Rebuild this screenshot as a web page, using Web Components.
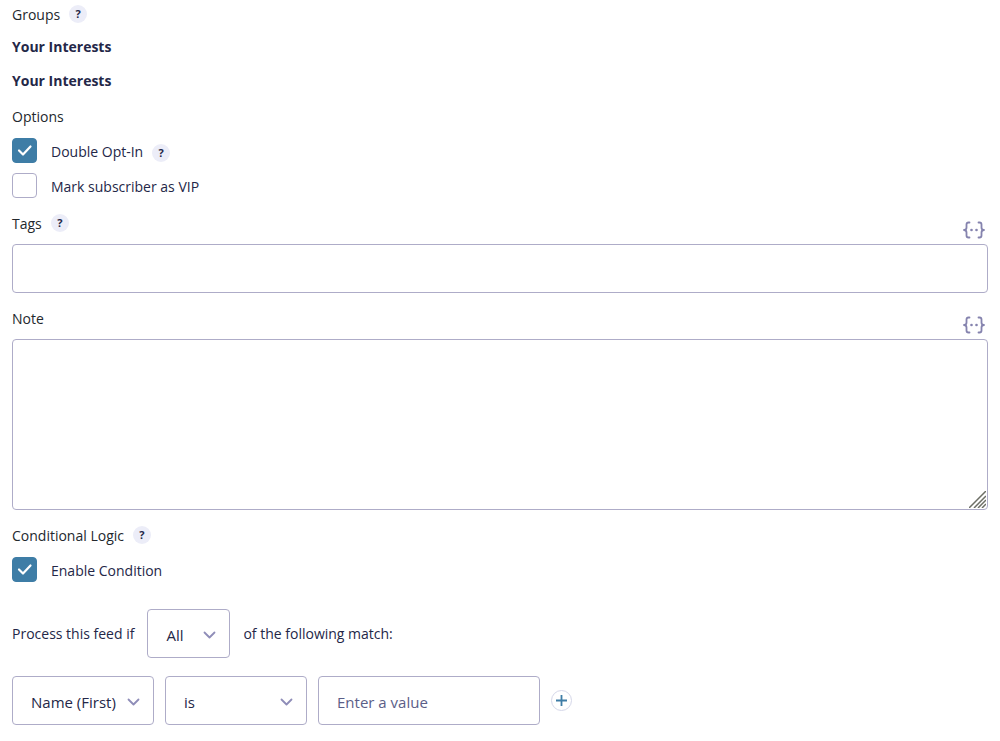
<!DOCTYPE html>
<html lang="en">
<head>
<meta charset="utf-8">
<meta name="viewport" content="width=device-width, initial-scale=1">
<title>Feed Settings</title>
<style>
    body {
        margin: 0;
        background: #fff;
        color: #242748;
        font: 14px/20px "Open Sans", "Noto Sans", sans-serif;
        --label: #23282d;
        --border: #aeacc8;
        --icon: #8583ae;
        --accent: #3e7da6;
        --control-height: 49px;
        --control-size: 15px;
    }
</style>
</head>
<body>
<feed-settings></feed-settings>

<script>
    /* Shared box for text inputs, textareas and selects. */
    const controlStyles = `
        .control {
            display: block;
            box-sizing: border-box;
            width: 100%;
            height: var(--control-height);
            margin: 0;
            padding: 2px 18px 0;
            border: 1px solid var(--border);
            border-radius: 4px;
            background: #fff;
            color: inherit;
            font: inherit;
            font-size: var(--control-size);
            appearance: none;
        }
        .control:focus-visible {
            outline: 2px solid var(--accent);
        }
    `;

    class HelpTip extends HTMLElement {
        constructor() {
            super();
            this.attachShadow({ mode: "open" });
        }

        connectedCallback() {
            this.shadowRoot.innerHTML = `
                <style>
                    :host { display: inline-flex; }
                    button {
                        width: 18px;
                        height: 18px;
                        padding: 0;
                        border: 0;
                        border-radius: 50%;
                        background: #ecedf8;
                        color: #242748;
                        font: bold 11px/18px "Open Sans", "Noto Sans", sans-serif;
                        cursor: pointer;
                    }
                </style>
                <button type="button" aria-label="Help">?</button>
            `;
        }
    }

    /* Label row with an optional help tip, followed by the slotted content. */
    class FieldGroup extends HTMLElement {
        constructor() {
            super();
            this.attachShadow({ mode: "open" });
        }

        connectedCallback() {
            this.shadowRoot.innerHTML = `
                <style>
                    :host { display: block; }
                    .title {
                        display: flex;
                        gap: 9px;
                        margin-bottom: var(--title-gap, 11px);
                        color: var(--label);
                    }
                    .content {
                        display: flex;
                        flex-direction: column;
                        gap: var(--content-gap, 10px);
                    }
                </style>
                <div class="title">
                    <span>${this.getAttribute("label")}</span>
                    ${this.hasAttribute("help") ? "<help-tip></help-tip>" : ""}
                </div>
                <div class="content"><slot></slot></div>
            `;
        }
    }

    class CheckOption extends HTMLElement {
        constructor() {
            super();
            this.attachShadow({ mode: "open" });
        }

        connectedCallback() {
            this.shadowRoot.innerHTML = `
                <style>
                    :host {
                        display: flex;
                        align-items: center;
                        gap: 9px;
                    }
                    label {
                        display: flex;
                        align-items: center;
                        gap: 14px;
                        cursor: pointer;
                    }
                    .box {
                        display: grid;
                        width: 25px;
                        height: 25px;
                    }
                    .box > * { grid-area: 1 / 1; }
                    input {
                        box-sizing: border-box;
                        width: 25px;
                        height: 25px;
                        margin: 0;
                        border: 1px solid var(--border);
                        border-radius: 4px;
                        background: #fff;
                        appearance: none;
                    }
                    input:checked {
                        border-color: var(--accent);
                        background: var(--accent);
                    }
                    svg {
                        visibility: hidden;
                        pointer-events: none;
                    }
                    input:checked + svg { visibility: visible; }
                    .text { padding-top: 2px; }
                    help-tip { padding-top: 4px; }
                </style>
                <label>
                    <span class="box">
                        <input type="checkbox" ${this.hasAttribute("checked") ? "checked" : ""}>
                        <svg width="25" height="25" viewBox="0 0 25 25" fill="none" stroke="#fff" stroke-width="2.200" stroke-linecap="round" stroke-linejoin="round" aria-hidden="true">
                            <path d="M7 12.500l4 4L18.500 8.500"/>
                        </svg>
                    </span>
                    <span class="text"><slot></slot></span>
                </label>
                ${this.hasAttribute("help") ? "<help-tip></help-tip>" : ""}
            `;
        }
    }

    /* Text input or textarea with the merge tag button above its right end. */
    class MergeField extends HTMLElement {
        constructor() {
            super();
            this.attachShadow({ mode: "open" });
        }

        connectedCallback() {
            const multiline = this.hasAttribute("multiline");
            this.shadowRoot.innerHTML = `
                <style>
                    ${controlStyles}
                    :host { display: block; }
                    .head {
                        display: flex;
                        gap: 9px;
                        margin-bottom: 4px;
                        color: var(--label);
                    }
                    .merge {
                        display: flex;
                        margin: 6px 3px 0 auto;
                        padding: 0;
                        border: 0;
                        background: none;
                        color: var(--icon);
                        cursor: pointer;
                    }
                    .area { position: relative; }
                    textarea.control {
                        height: 171px;
                        padding: 12px 18px;
                        resize: vertical;
                    }
                    textarea::-webkit-resizer { display: none; }
                    .grip {
                        position: absolute;
                        right: 2px;
                        bottom: 2px;
                        pointer-events: none;
                    }
                </style>
                <div class="head">
                    <label for="field">${this.getAttribute("label")}</label>
                    ${this.hasAttribute("help") ? "<help-tip></help-tip>" : ""}
                    <button class="merge" type="button" aria-label="Insert merge tag">
                        <svg width="22" height="20" viewBox="0 0 22 20" fill="none" stroke="currentColor" stroke-width="1.800" stroke-linecap="round" stroke-linejoin="round" aria-hidden="true">
                            <path d="M6.500 2.500H5.500Q3.500 2.500 3.500 4.500V7.500Q3.500 10 1 10Q3.500 10 3.500 12.500V15.500Q3.500 17.500 5.500 17.500H6.500"/>
                            <path d="M15.500 2.500h1Q18.500 2.500 18.500 4.500V7.500Q18.500 10 21 10Q18.500 10 18.500 12.500V15.500Q18.500 17.500 16.500 17.500H15.500"/>
                            <g fill="currentColor" stroke="none">
                                <circle cx="8.500" cy="10" r="1.300"/>
                                <circle cx="13.500" cy="10" r="1.300"/>
                            </g>
                        </svg>
                    </button>
                </div>
                ${multiline ? `
                <div class="area">
                    <textarea id="field" class="control"></textarea>
                    <svg class="grip" width="17" height="17" viewBox="0 0 17 17" stroke="#6d6f66" stroke-width="1.500" aria-hidden="true">
                        <path d="M0 17L17 0M5 17L17 5M9 17L17 9M13 17L17 13"/>
                    </svg>
                </div>` : `<input id="field" class="control" type="text">`}
            `;
        }
    }

    class SelectBox extends HTMLElement {
        constructor() {
            super();
            this.attachShadow({ mode: "open" });
        }

        connectedCallback() {
            const options = this.getAttribute("options").split("|");
            this.shadowRoot.innerHTML = `
                <style>
                    ${controlStyles}
                    :host {
                        display: grid;
                        align-items: center;
                    }
                    select, svg { grid-area: 1 / 1; }
                    select.control { padding-right: 32px; }
                    svg {
                        justify-self: end;
                        margin: 3px 14px 0 0;
                        pointer-events: none;
                    }
                </style>
                <select class="control" aria-label="${this.getAttribute("label")}">
                    ${options.map((option) => `<option>${option}</option>`).join("")}
                </select>
                <svg width="13" height="8" viewBox="0 0 13 8" fill="none" stroke="#8f8db8" stroke-width="1.800" stroke-linecap="round" stroke-linejoin="round" aria-hidden="true">
                    <path d="M1.500 1.500l5 5 5-5"/>
                </svg>
            `;
        }
    }

    class ConditionRules extends HTMLElement {
        constructor() {
            super();
            this.attachShadow({ mode: "open" });
        }

        connectedCallback() {
            this.shadowRoot.innerHTML = `
                <style>
                    ${controlStyles}
                    :host {
                        display: flex;
                        flex-direction: column;
                        gap: 18px;
                    }
                    .row {
                        display: flex;
                        align-items: center;
                        gap: 13px;
                    }
                    .rule { gap: 11px; }
                    .mode { flex: 0 0 83px; }
                    .part { flex: 0 1 142px; }
                    .value { flex: 0 1 222px; }
                    .value::placeholder {
                        color: #5b5e88;
                        opacity: 1;
                    }
                    .add {
                        display: flex;
                        align-items: center;
                        justify-content: center;
                        width: 21px;
                        height: 21px;
                        padding: 0;
                        border: 1px solid #d5d7e9;
                        border-radius: 50%;
                        background: #fff;
                        cursor: pointer;
                    }
                </style>
                <div class="row">
                    <span>Process this feed if</span>
                    <select-box class="mode" label="Match mode" options="All|Any"></select-box>
                    <span>of the following match:</span>
                </div>
                <div class="row rule">
                    <select-box class="part" label="Field" options="Name (First)|Name (Last)|Email"></select-box>
                    <select-box class="part" label="Operator" options="is|is not|contains"></select-box>
                    <input class="control value" type="text" placeholder="Enter a value" aria-label="Value">
                    <button class="add" type="button" aria-label="Add rule">
                        <svg width="11" height="11" viewBox="0 0 11 11" stroke="#3e7da6" stroke-width="1.800" aria-hidden="true">
                            <path d="M5.500 0v11M0 5.500h11"/>
                        </svg>
                    </button>
                </div>
            `;
        }
    }

    class FeedSettings extends HTMLElement {
        constructor() {
            super();
            this.attachShadow({ mode: "open" });
        }

        connectedCallback() {
            this.shadowRoot.innerHTML = `
                <style>
                    :host {
                        display: flex;
                        flex-direction: column;
                        gap: 16px;
                        padding: 5px 12px 14px;
                    }
                    .groups {
                        --title-gap: 12px;
                        --content-gap: 14px;
                    }
                    .interest {
                        margin: 0;
                        font-size: 14px;
                        font-weight: 700;
                    }
                    condition-rules { margin-top: 11px; }
                </style>
                <field-group class="groups" label="Groups" help>
                    <h3 class="interest">Your Interests</h3>
                    <h3 class="interest">Your Interests</h3>
                </field-group>
                <field-group label="Options">
                    <check-option checked help>Double Opt-In</check-option>
                    <check-option>Mark subscriber as VIP</check-option>
                </field-group>
                <merge-field label="Tags" help></merge-field>
                <merge-field label="Note" multiline></merge-field>
                <field-group label="Conditional Logic" help>
                    <check-option checked>Enable Condition</check-option>
                </field-group>
                <condition-rules></condition-rules>
            `;
        }
    }

    customElements.define("help-tip", HelpTip);
    customElements.define("field-group", FieldGroup);
    customElements.define("check-option", CheckOption);
    customElements.define("merge-field", MergeField);
    customElements.define("select-box", SelectBox);
    customElements.define("condition-rules", ConditionRules);
    customElements.define("feed-settings", FeedSettings);
</script>
</body>
</html>
